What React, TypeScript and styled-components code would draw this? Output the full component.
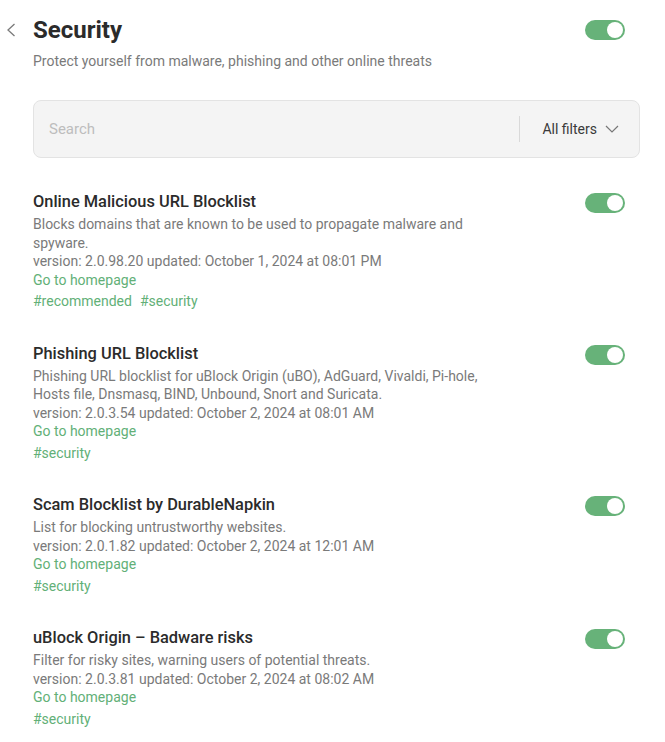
import React from "react";
import styled, { createGlobalStyle } from "styled-components";

const Global = createGlobalStyle`
  html, body { margin: 0; padding: 0; background: #fff; }
  body { font-family: Roboto, "Noto Sans", Arial, sans-serif; -webkit-font-smoothing: antialiased; }
  * { box-sizing: border-box; }
`;

const Page = styled.div`
  padding: 16px 25px 0 33px;
`;

const Header = styled.div`
  display: flex;
  align-items: center;
  justify-content: space-between;
  padding-right: 15px;
`;

const TitleWrap = styled.div`
  display: flex;
  align-items: center;
`;

const BackButton = styled.button`
  border: 0;
  background: none;
  padding: 0 0 0 6px;
  margin-left: -33px;
  width: 33px;
  height: 28px;
  display: flex;
  align-items: center;
  justify-content: flex-start;
  color: #7a7a7a;
  cursor: pointer;
`;

const Title = styled.h1`
  margin: 0;
  font-size: 24px;
  line-height: 28px;
  font-weight: 700;
  color: #2b2b2b;
`;

const Subtitle = styled.p`
  margin: 7px 0 0;
  font-size: 14px;
  line-height: 20px;
  color: #7a7a7a;
`;

const SearchBox = styled.div`
  margin-top: 29px;
  height: 58px;
  background: #f4f4f4;
  border: 1px solid #e3e3e3;
  border-radius: 8px;
  display: flex;
  align-items: center;
  padding: 0 20px 0 15px;
`;

const SearchInput = styled.input`
  flex: 1;
  border: 0;
  padding: 0;
  background: transparent;
  font-family: inherit;
  font-size: 15px;
  color: #333;
  outline: none;
  &::placeholder { color: #bdbdbd; }
`;

const Divider = styled.div`
  width: 1px;
  height: 26px;
  background: #d9d9d9;
  margin: 0 22px 0 0;
`;

const FilterButton = styled.button`
  border: 0;
  background: none;
  padding: 0;
  display: flex;
  align-items: center;
  gap: 8px;
  font-family: inherit;
  font-size: 14px;
  color: #3a3a3a;
  cursor: pointer;
`;

const List = styled.div`
  margin-top: 34px;
  display: flex;
  flex-direction: column;
  gap: 33px;
`;

const Item = styled.div`
  display: flex;
  justify-content: space-between;
  align-items: flex-start;
  padding-right: 15px;
`;

const Info = styled.div`
  max-width: 458px;
`;

const ItemTitle = styled.div`
  font-size: 16.4px;
  line-height: 20px;
  font-weight: 500;
  color: #2b2b2b;
`;

const Desc = styled.div`
  margin-top: 3px;
  font-size: 14px;
  line-height: 18.5px;
  color: #7a7a7a;
`;

const Link = styled.a`
  display: block;
  font-size: 14px;
  line-height: 18.5px;
  color: #62b077;
  text-decoration: none;
`;

const Tags = styled.div`
  margin-top: 3px;
  display: flex;
  gap: 8px;
  font-size: 14px;
  line-height: 18.5px;
  color: #62b077;
`;

const Toggle = styled.div<{ $on: boolean }>`
  flex: none;
  width: 40px;
  height: 20px;
  border-radius: 10px;
  background: ${(p) => (p.$on ? "#67b279" : "#ccc")};
  position: relative;
  &::after {
    content: "";
    position: absolute;
    top: 2px;
    left: ${(p) => (p.$on ? "22px" : "2px")};
    width: 16px;
    height: 16px;
    border-radius: 50%;
    background: #fff;
  }
`;

const ItemToggle = styled(Toggle)`
  margin-top: 1px;
`;

type Filter = {
  title: string;
  desc: string;
  version: string;
  tags: string[];
};

const filters: Filter[] = [
  {
    title: "Online Malicious URL Blocklist",
    desc: "Blocks domains that are known to be used to propagate malware and spyware.",
    version: "version: 2.0.98.20 updated: October 1, 2024 at 08:01 PM",
    tags: ["#recommended", "#security"],
  },
  {
    title: "Phishing URL Blocklist",
    desc: "Phishing URL blocklist for uBlock Origin (uBO), AdGuard, Vivaldi, Pi-hole, Hosts file, Dnsmasq, BIND, Unbound, Snort and Suricata.",
    version: "version: 2.0.3.54 updated: October 2, 2024 at 08:01 AM",
    tags: ["#security"],
  },
  {
    title: "Scam Blocklist by DurableNapkin",
    desc: "List for blocking untrustworthy websites.",
    version: "version: 2.0.1.82 updated: October 2, 2024 at 12:01 AM",
    tags: ["#security"],
  },
  {
    title: "uBlock Origin – Badware risks",
    desc: "Filter for risky sites, warning users of potential threats.",
    version: "version: 2.0.3.81 updated: October 2, 2024 at 08:02 AM",
    tags: ["#security"],
  },
];

export default function App() {
  return (
    <>
      <Global />
      <Page>
        <Header>
          <TitleWrap>
            <BackButton aria-label="Back">
              <svg width="10" height="14" viewBox="0 0 10 14" fill="none">
                <path d="M8.5 1 L2 7 L8.5 13" stroke="currentColor" strokeWidth="1.3" />
              </svg>
            </BackButton>
            <Title>Security</Title>
          </TitleWrap>
          <Toggle $on />
        </Header>
        <Subtitle>Protect yourself from malware, phishing and other online threats</Subtitle>
        <SearchBox>
          <SearchInput placeholder="Search" />
          <Divider />
          <FilterButton>
            All filters
            <svg width="14" height="8" viewBox="0 0 14 8" fill="none">
              <path d="M1 1 L7 7 L13 1" stroke="#777" strokeWidth="1.2" />
            </svg>
          </FilterButton>
        </SearchBox>
        <List>
          {filters.map((f) => (
            <Item key={f.title}>
              <Info>
                <ItemTitle>{f.title}</ItemTitle>
                <Desc>
                  {f.desc}
                  <br />
                  {f.version}
                </Desc>
                <Link href="#">Go to homepage</Link>
                <Tags>
                  {f.tags.map((t) => (
                    <span key={t}>{t}</span>
                  ))}
                </Tags>
              </Info>
              <ItemToggle $on />
            </Item>
          ))}
        </List>
      </Page>
    </>
  );
}
